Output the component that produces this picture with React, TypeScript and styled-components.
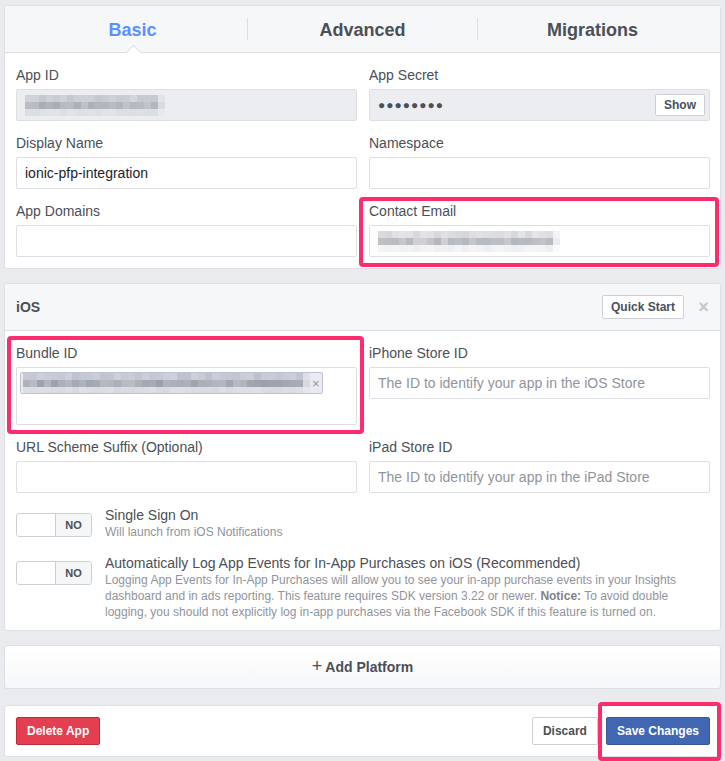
import styled, { createGlobalStyle } from "styled-components";

const GlobalStyle = createGlobalStyle`
  body {
    margin: 0;
    background: #e9ebee;
    font-family: "Liberation Sans", Arial, Helvetica, sans-serif;
    color: #4b4f56;
  }
  * { box-sizing: border-box; }
`;

const Page = styled.div`
  padding: 5px 4px 4px;
  display: flex;
  flex-direction: column;
  gap: 14px;
`;

const Panel = styled.div`
  background: #fff;
  border: 1px solid #dddfe2;
  border-radius: 3px;
`;

const TabBar = styled.div`
  display: flex;
  height: 47px;
  padding: 0 13px;
  background: #f6f7f9;
  border-bottom: 1px solid #dddfe2;
  border-radius: 3px 3px 0 0;
`;

const Tab = styled.div<{ $active?: boolean; $divider?: boolean }>`
  position: relative;
  flex: 1;
  display: flex;
  align-items: center;
  justify-content: center;
  padding-top: 2px;
  font-size: 18px;
  font-weight: bold;
  color: ${(p) => (p.$active ? "#5890ff" : "#4b4f56")};
  border-left: ${(p) => (p.$divider ? "1px solid #dddfe2" : "none")};
  margin: 12px 0;
  &::after {
    content: "";
    display: ${(p) => (p.$active ? "block" : "none")};
    position: absolute;
    left: 50%;
    bottom: -18px;
    width: 10px;
    height: 10px;
    margin-left: -5px;
    background: #fff;
    border-left: 1px solid #dddfe2;
    border-top: 1px solid #dddfe2;
    transform: rotate(45deg);
  }
`;

const Body = styled.div<{ $bottom?: number }>`
  display: grid;
  grid-template-columns: 1fr 1fr;
  column-gap: 12px;
  row-gap: 12px;
  padding: 12px 10px ${(p) => p.$bottom ?? 11}px 11px;
`;

const Field = styled.div<{ $mark?: string }>`
  position: relative;
  display: flex;
  flex-direction: column;
  gap: 4px;
  &::before {
    content: "";
    display: ${(p) => (p.$mark ? "block" : "none")};
    position: absolute;
    inset: ${(p) => p.$mark};
    border: 4px solid #fe2c6c;
    border-radius: 4px;
    pointer-events: none;
  }
`;

const Label = styled.div`
  font-size: 14px;
  line-height: 20px;
  color: #4b4f56;
`;

const Input = styled.div<{ $disabled?: boolean; $tall?: boolean }>`
  position: relative;
  height: ${(p) => (p.$tall ? 58 : 32)}px;
  border: 1px solid #dddfe2;
  border-radius: 2px;
  background: ${(p) => (p.$disabled ? "#ebedf0" : "#fff")};
  display: flex;
  align-items: ${(p) => (p.$tall ? "flex-start" : "center")};
  padding: ${(p) => (p.$tall ? "4px 3px" : "0 8px")};
  font-size: 14px;
  color: #1d2129;
`;

const Placeholder = styled.span`
  color: #90949c;
`;

const Dots = styled.span`
  font-size: 12px;
  letter-spacing: 1px;
  color: #4b4f56;
`;

const SmallButton = styled.button<{ $inset?: boolean }>`
  margin-left: auto;
  height: ${(p) => (p.$inset ? 22 : 24)}px;
  padding: 0 8px;
  background: #fff;
  border: 1px solid #ccd0d5;
  border-radius: 2px;
  font-family: inherit;
  font-size: 12px;
  font-weight: bold;
  color: #4b4f56;
  margin-right: ${(p) => (p.$inset ? -4 : 0)}px;
`;

const PixelRow = styled.div`
  display: flex;
  height: 7px;
`;

const Pixel = styled.span`
  width: 7px;
  height: 7px;
`;

const PixelBox = styled.div`
  display: flex;
  flex-direction: column;
`;

// blurred-out private value, drawn as a mosaic of grey cells
function Pixelated({ cols, seed, dark = 0.4 }: { cols: number; seed: number; dark?: number }) {
  const rows = [0.55, 1, 0.22];
  let s = seed;
  const rnd = () => {
    s = (s * 9301 + 49297) % 233280;
    return s / 233280;
  };
  return (
    <PixelBox>
      {rows.map((w, r) => (
        <PixelRow key={r}>
          {Array.from({ length: cols }).map((_, c) => {
            const edge = c === cols - 1 ? 0.35 : 1;
            const a = (0.6 + rnd() * 0.4) * w * dark * edge;
            return <Pixel key={c} style={{ background: `rgba(60,66,85,${a.toFixed(3)})` }} />;
          })}
        </PixelRow>
      ))}
    </PixelBox>
  );
}

const Tag = styled.div`
  display: flex;
  align-items: center;
  gap: 2px;
  width: 303px;
  height: 22px;
  padding-left: 2px;
  background: #e9ebf0;
  border: 1px solid #bcc3d4;
  border-radius: 2px;
  overflow: hidden;
`;

const TagClose = styled.span`
  margin-left: auto;
  padding-right: 3px;
  font-size: 13px;
  color: #90949c;
`;

const SectionHead = styled.div`
  display: flex;
  align-items: center;
  height: 47px;
  padding: 0 10px 0 11px;
  background: #f6f7f9;
  border-bottom: 1px solid #dddfe2;
  border-radius: 3px 3px 0 0;
  font-size: 14px;
  font-weight: bold;
  color: #4b4f56;
`;

const CloseX = styled.span`
  margin-left: 13px;
  width: 13px;
  font-size: 18px;
  font-weight: bold;
  color: #c4c7cd;
  text-align: center;
`;

const Options = styled.div`
  display: flex;
  flex-direction: column;
  gap: 14px;
  padding: 13px 10px 10px 11px;
`;

const Option = styled.div`
  display: flex;
  gap: 13px;
`;

const Toggle = styled.div`
  flex: none;
  display: flex;
  width: 76px;
  height: 24px;
  margin-top: 7px;
  border: 1px solid #ccd0d5;
  border-radius: 3px;
  overflow: hidden;
  background: #fff;
`;

const ToggleOff = styled.span`
  margin-left: auto;
  width: 36px;
  display: flex;
  align-items: center;
  justify-content: center;
  background: #f5f6f7;
  border-left: 1px solid #ccd0d5;
  font-size: 11px;
  font-weight: bold;
  color: #4b4f56;
`;

const OptionText = styled.div`
  display: flex;
  flex-direction: column;
`;

const OptionTitle = styled.div`
  font-size: 14px;
  line-height: 18px;
  color: #4b4f56;
`;

const OptionHint = styled.div`
  font-size: 12px;
  line-height: 16px;
  color: #90949c;
  b { color: #7f838b; }
`;

const AddPlatform = styled.div`
  height: 44px;
  display: flex;
  align-items: center;
  justify-content: center;
  gap: 3px;
  background: linear-gradient(#fff, #f6f7f9);
  border: 1px solid #dddfe2;
  border-radius: 3px;
  font-size: 14px;
  font-weight: bold;
  color: #4b4f56;
  span { font-size: 18px; font-weight: normal; margin-top: -2px; }
`;

const Footer = styled(Panel)`
  display: flex;
  align-items: center;
  gap: 8px;
  height: 52px;
  padding: 0 10px 0 11px;
  margin-top: 2px;
`;

const Button = styled.button<{ $kind: "danger" | "default" | "primary" }>`
  height: 28px;
  padding: 0 10px;
  border-radius: 2px;
  font-family: inherit;
  font-size: 12px;
  font-weight: bold;
  border: 1px solid
    ${(p) => (p.$kind === "danger" ? "#c4283a" : p.$kind === "primary" ? "#365899" : "#ccd0d5")};
  background: ${(p) =>
    p.$kind === "danger" ? "#e33f50" : p.$kind === "primary" ? "#4267b2" : "#fff"};
  color: ${(p) => (p.$kind === "default" ? "#4b4f56" : "#fff")};
`;

const Spacer = styled.div`
  flex: 1;
`;

const Marked = styled.div`
  position: relative;
  &::before {
    content: "";
    position: absolute;
    inset: -15px -11px -16px -8px;
    border: 4px solid #fe2c6c;
    border-radius: 4px;
    pointer-events: none;
  }
`;

export default function App() {
  return (
    <Page>
      <GlobalStyle />
      <Panel>
        <TabBar>
          <Tab $active>Basic</Tab>
          <Tab $divider>Advanced</Tab>
          <Tab $divider>Migrations</Tab>
        </TabBar>
        <Body>
          <Field>
            <Label>App ID</Label>
            <Input $disabled>
              <Pixelated cols={20} seed={3} />
            </Input>
          </Field>
          <Field>
            <Label>App Secret</Label>
            <Input $disabled>
              <Dots>●●●●●●●●</Dots>
              <SmallButton $inset>Show</SmallButton>
            </Input>
          </Field>
          <Field>
            <Label>Display Name</Label>
            <Input>ionic-pfp-integration</Input>
          </Field>
          <Field>
            <Label>Namespace</Label>
            <Input />
          </Field>
          <Field>
            <Label>App Domains</Label>
            <Input />
          </Field>
          <Field $mark="-4px -9px -10px -10px">
            <Label>Contact Email</Label>
            <Input>
              <Pixelated cols={26} seed={11} />
            </Input>
          </Field>
        </Body>
      </Panel>

      <Panel>
        <SectionHead>
          iOS
          <SmallButton>Quick Start</SmallButton>
          <CloseX>×</CloseX>
        </SectionHead>
        <Body $bottom={0}>
          <Field $mark="-7px -7px -9px -9px">
            <Label>Bundle ID</Label>
            <Input $tall>
              <Tag>
                <Pixelated cols={41} seed={7} dark={0.45} />
                <TagClose>×</TagClose>
              </Tag>
            </Input>
          </Field>
          <Field>
            <Label>iPhone Store ID</Label>
            <Input>
              <Placeholder>The ID to identify your app in the iOS Store</Placeholder>
            </Input>
          </Field>
          <Field>
            <Label>URL Scheme Suffix (Optional)</Label>
            <Input />
          </Field>
          <Field>
            <Label>iPad Store ID</Label>
            <Input>
              <Placeholder>The ID to identify your app in the iPad Store</Placeholder>
            </Input>
          </Field>
        </Body>
        <Options>
          <Option>
            <Toggle>
              <ToggleOff>NO</ToggleOff>
            </Toggle>
            <OptionText>
              <OptionTitle>Single Sign On</OptionTitle>
              <OptionHint>Will launch from iOS Notifications</OptionHint>
            </OptionText>
          </Option>
          <Option>
            <Toggle>
              <ToggleOff>NO</ToggleOff>
            </Toggle>
            <OptionText>
              <OptionTitle>
                Automatically Log App Events for In-App Purchases on iOS (Recommended)
              </OptionTitle>
              <OptionHint>
                Logging App Events for In-App Purchases will allow you to see your in-app purchase
                events in your Insights dashboard and in ads reporting. This feature requires SDK
                version 3.22 or newer. <b>Notice:</b> To avoid double logging, you should not
                explicitly log in-app purchases via the Facebook SDK if this feature is turned on.
              </OptionHint>
            </OptionText>
          </Option>
        </Options>
      </Panel>

      <AddPlatform>
        <span>+</span> Add Platform
      </AddPlatform>

      <Footer>
        <Button $kind="danger">Delete App</Button>
        <Spacer />
        <Button $kind="default">Discard</Button>
        <Marked>
          <Button $kind="primary">Save Changes</Button>
        </Marked>
      </Footer>
    </Page>
  );
}
